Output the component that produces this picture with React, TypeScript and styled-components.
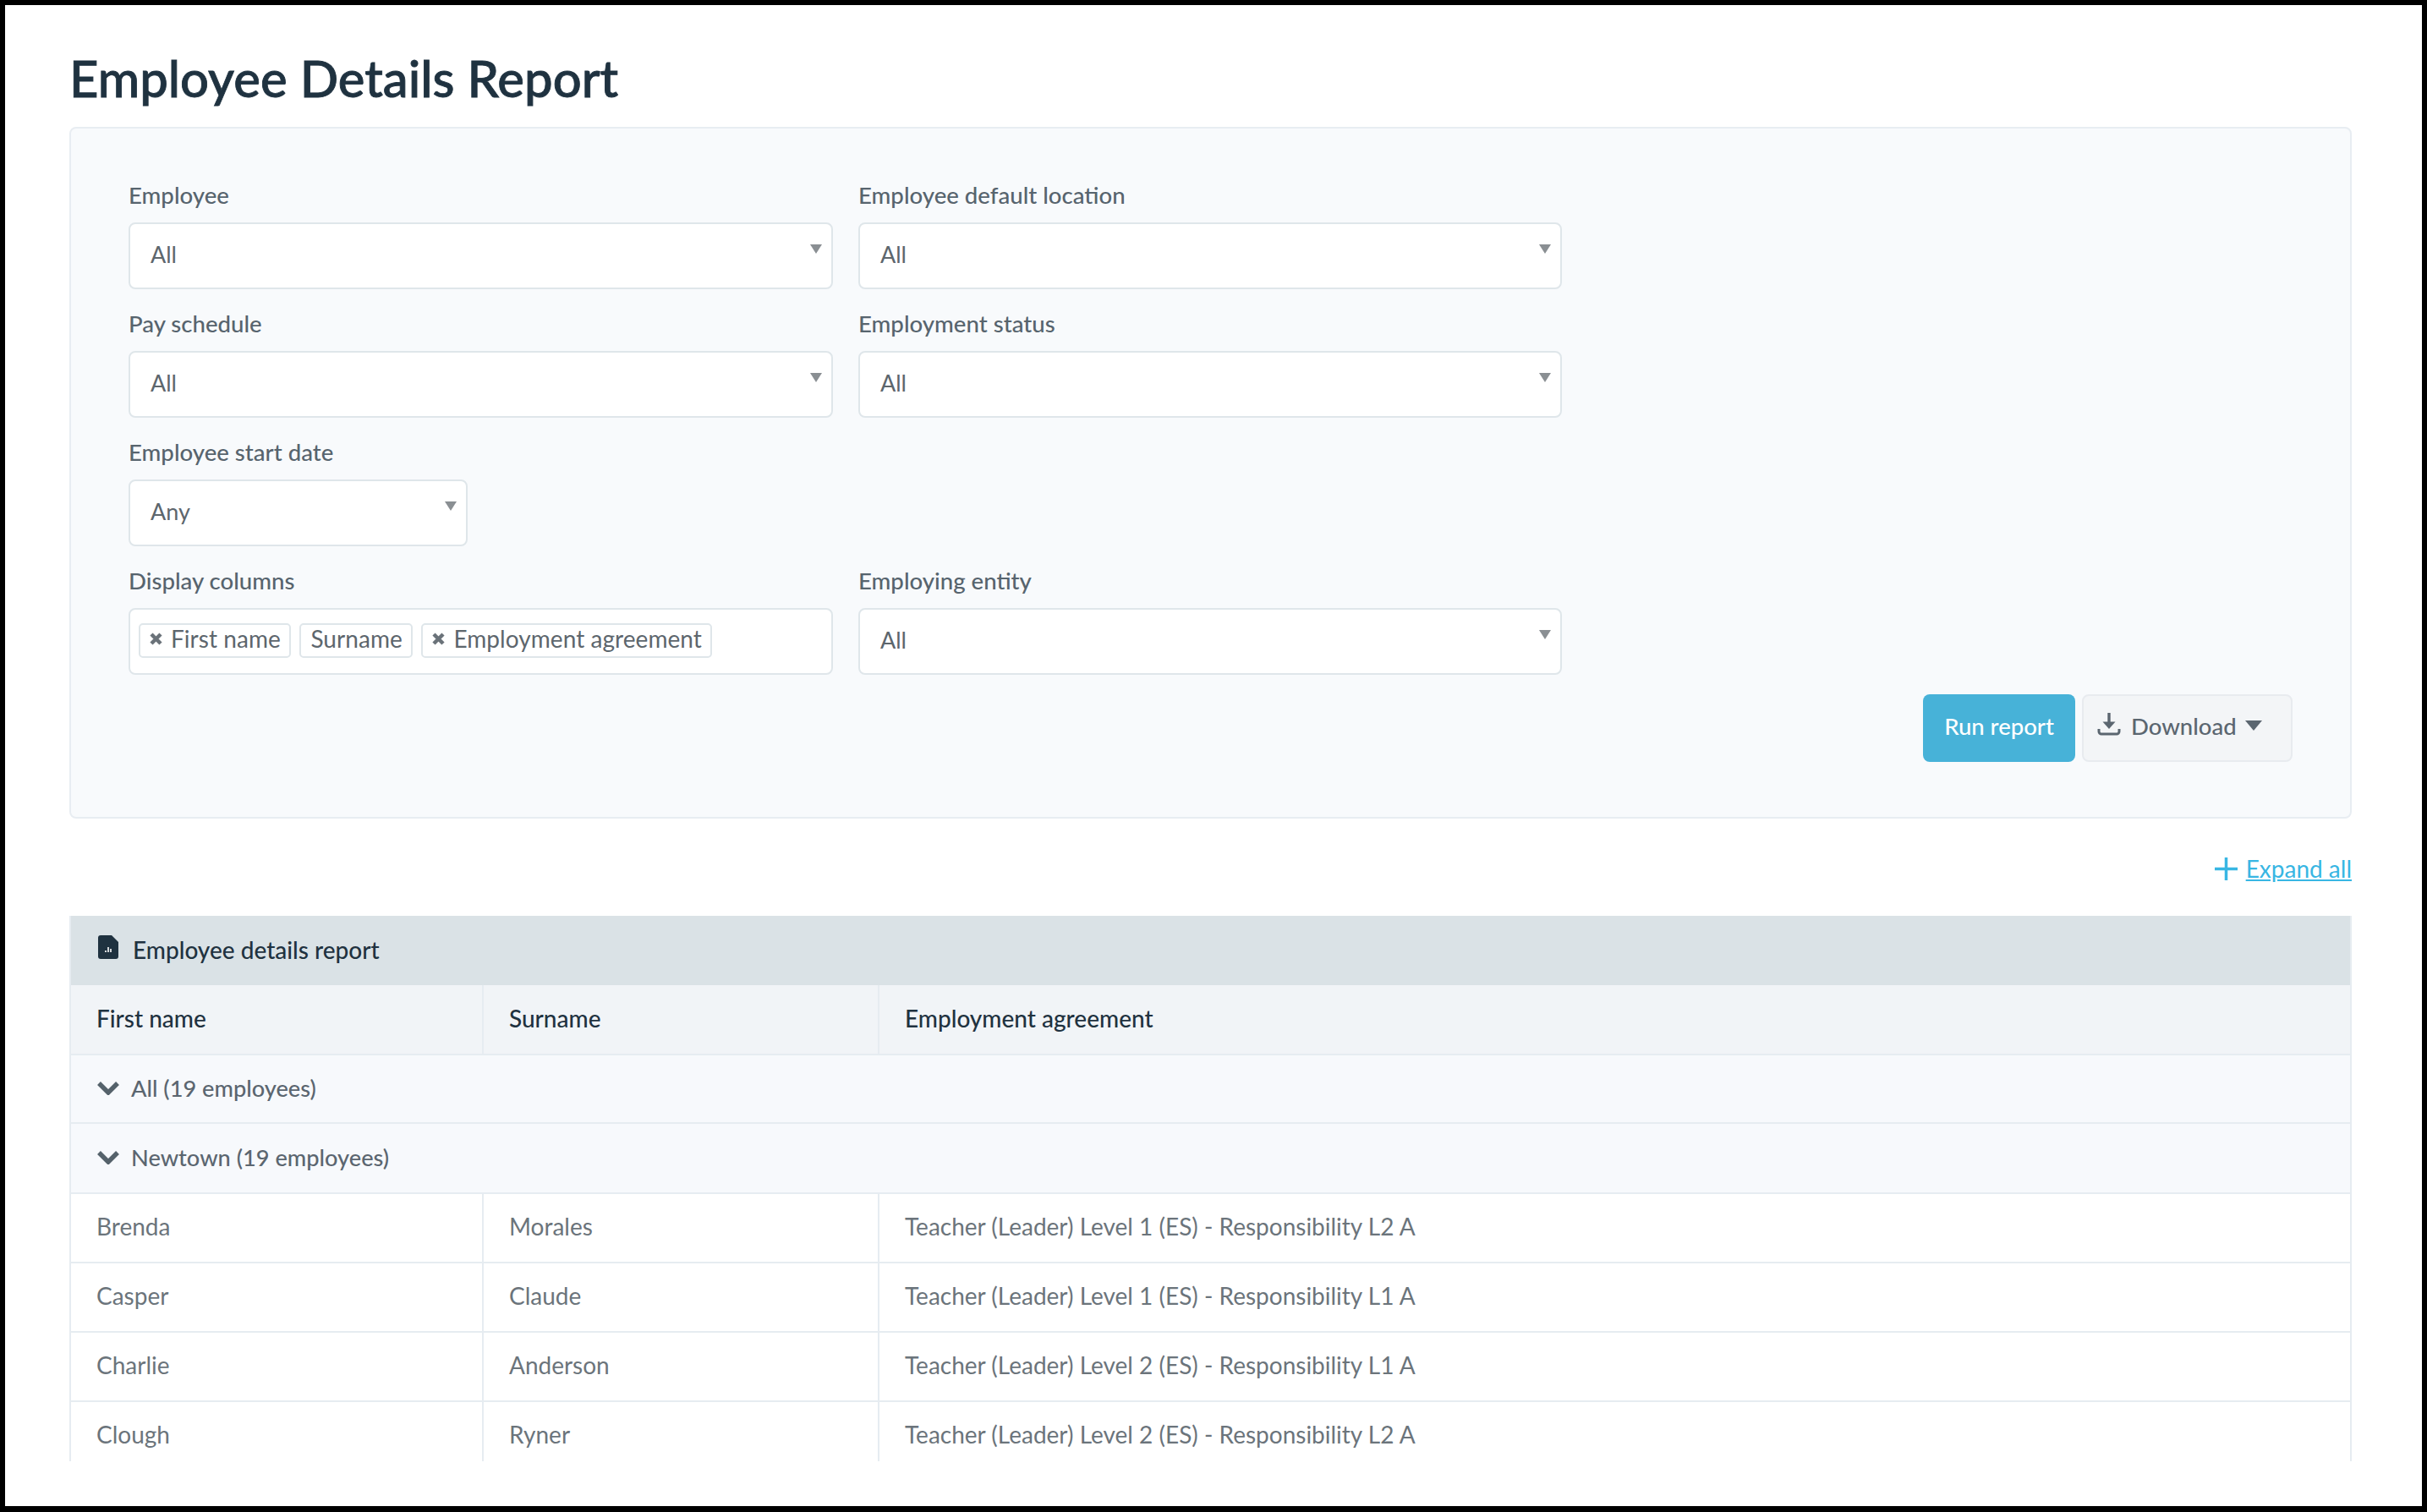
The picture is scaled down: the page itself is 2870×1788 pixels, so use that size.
import React from "react";
import styled, { createGlobalStyle } from "styled-components";

const GlobalStyle = createGlobalStyle`
  html, body {
    margin: 0;
    padding: 0;
    background: #000;
    font-family: "Lato", "Liberation Sans", sans-serif;
  }
  * { box-sizing: border-box; }
`;

const Frame = styled.div`
  width: 2870px;
  height: 1788px;
  padding: 6px 6px 7px 6px;
  background: #000;
  overflow: hidden;
`;

const Page = styled.div`
  height: 100%;
  background: #fff;
  padding: 46px 83px 0 76px;
  display: flex;
  flex-direction: column;
`;

const Title = styled.h1`
  margin: 0 0 18px;
  font-size: 59.8px;
  line-height: 80px;
  font-weight: 500;
  -webkit-text-stroke: 0.9px #1f3240;
  color: #1f3240;
`;

const FilterPanel = styled.section`
  height: 818px;
  flex: none;
  background: #f8fafc;
  border: 2px solid #e8edf2;
  border-radius: 8px;
  padding: 62px 68px 0 68px;
  display: flex;
  flex-direction: column;
`;

const FormGrid = styled.div`
  display: grid;
  grid-template-columns: 833px 832px;
  column-gap: 30px;
  row-gap: 24px;
`;

const Field = styled.div<{ $narrow?: boolean }>`
  display: flex;
  flex-direction: column;
  width: ${(p) => (p.$narrow ? "401px" : "auto")};
`;

const Label = styled.label`
  font-size: 27.6px;
  line-height: 36px;
  font-weight: 500;
  color: #57646e;
  margin: -1px 0 14px;
`;

const SelectBox = styled.div`
  height: 79px;
  background: #fff;
  border: 2px solid #dfe6ea;
  border-radius: 8px;
  padding: 0 11px 5px 24px;
  display: flex;
  align-items: center;
  justify-content: space-between;
  font-size: 27px;
  color: #5d666d;
`;

const Caret = styled.svg`
  width: 14px;
  height: 11px;
  margin-bottom: 11px;
  fill: #8a8f93;
`;

const TagBox = styled.div`
  height: 79px;
  background: #fff;
  border: 2px solid #dfe6ea;
  border-radius: 8px;
  padding: 16px 10px 0;
  display: flex;
  align-items: flex-start;
  gap: 10.5px;
`;

const Tag = styled.span`
  height: 41px;
  background: #fff;
  border: 2px solid #dfe6ea;
  border-radius: 5px;
  padding: 0 10px 5px 11px;
  display: inline-flex;
  align-items: center;
  gap: 10px;
  font-size: 28px;
  letter-spacing: 0.06px;
  color: #5d666d;
`;

const TagX = styled.svg`
  width: 15px;
  height: 15px;
  stroke: #6a7279;
  stroke-width: 4.5;
  fill: none;
`;

const Actions = styled.div`
  margin-top: 23px;
  display: flex;
  justify-content: flex-end;
  gap: 8px;
`;

const RunButton = styled.button`
  width: 180px;
  height: 80px;
  border: 0;
  border-radius: 8px;
  background: #47b2d8;
  color: #fff;
  font: 500 27.5px "Lato", sans-serif;
  padding: 0 0 5px;
`;

const DownloadButton = styled.button`
  width: 249px;
  height: 80px;
  border: 2px solid #e8ebef;
  border-radius: 8px;
  background: #f3f5f7;
  color: #5b6670;
  font: 500 27.5px "Lato", sans-serif;
  padding: 0 0 5px 16px;
  display: flex;
  align-items: center;
`;

const DownloadIcon = styled.svg`
  width: 28px;
  height: 28px;
  margin: -6px 12px 0 0;
  flex: none;
`;

const DownCaret = styled.svg`
  width: 20px;
  height: 12px;
  margin: -1px 0 0 10px;
  fill: #5b6670;
`;

const ExpandRow = styled.div`
  margin: 36px 0 33px;
  height: 46px;
  display: flex;
  align-items: center;
  justify-content: flex-end;
  gap: 10px;
`;

const PlusIcon = styled.svg`
  width: 27px;
  height: 27px;
  stroke: #38b6e3;
  stroke-width: 3.5;
`;

const ExpandLink = styled.a`
  font-size: 28px;
  color: #38b6e3;
  text-decoration: underline;
`;

const Table = styled.div`
  flex: none;
  height: 645px;
  overflow: hidden;
  border-left: 2px solid #e6ecf1;
  border-right: 2px solid #e6ecf1;
`;

const ReportHead = styled.div`
  height: 82px;
  background: #dae2e6;
  padding: 0 0 3px 32px;
  display: flex;
  align-items: center;
  gap: 17px;
  font-size: 28px;
  font-weight: 500;
  color: #1f3240;
`;

const DocIcon = styled.svg`
  width: 24px;
  height: 28px;
  margin-top: -6px;
`;

const Row = styled.div<{ $head?: boolean }>`
  height: ${(p) => (p.$head ? "83px" : "82px")};
  display: grid;
  grid-template-columns: 488px 468px 1fr;
  background: ${(p) => (p.$head ? "#f1f4f7" : "#fff")};
  border-bottom: 2px solid #e6ecf1;
`;

const Cell = styled.div<{ $head?: boolean }>`
  padding: 0 0 4px 30px;
  display: flex;
  align-items: center;
  font-size: 28px;
  font-weight: ${(p) => (p.$head ? 500 : 400)};
  color: ${(p) => (p.$head ? "#1f3240" : "#6b747b")};
  border-right: 2px solid #e6ecf1;
  &:last-child { border-right: 0; }
`;

const GroupRow = styled.div<{ $tall?: boolean }>`
  height: ${(p) => (p.$tall ? "83px" : "81px")};
  background: #f7f9fc;
  border-bottom: 2px solid #e6ecf1;
  padding: 0 0 2px 31px;
  display: flex;
  align-items: center;
  gap: 14px;
  font-size: 27.2px;
  font-weight: 500;
  color: #5b6670;
`;

const Chevron = styled.svg`
  width: 26px;
  height: 16px;
  fill: none;
  stroke: #55626b;
  stroke-width: 5.5;
`;

const people = [
  ["Brenda", "Morales", "Teacher (Leader) Level 1 (ES) - Responsibility L2 A"],
  ["Casper", "Claude", "Teacher (Leader) Level 1 (ES) - Responsibility L1 A"],
  ["Charlie", "Anderson", "Teacher (Leader) Level 2 (ES) - Responsibility L1 A"],
  ["Clough", "Ryner", "Teacher (Leader) Level 2 (ES) - Responsibility L2 A"],
];

const Select = ({ value }: { value: string }) => (
  <SelectBox>
    {value}
    <Caret viewBox="0 0 14 11">
      <path d="M0 0h14L7 11z" />
    </Caret>
  </SelectBox>
);

const Remove = () => (
  <TagX viewBox="0 0 15 15">
    <path d="M2 2l11 11M13 2L2 13" />
  </TagX>
);

const Group = ({ label, tall }: { label: string; tall?: boolean }) => (
  <GroupRow $tall={tall}>
    <Chevron viewBox="0 0 26 16">
      <path d="M2 2l11 11L24 2" />
    </Chevron>
    {label}
  </GroupRow>
);

export default function App() {
  return (
    <Frame>
      <GlobalStyle />
      <Page>
        <Title>Employee Details Report</Title>
        <FilterPanel>
          <FormGrid>
            <Field>
              <Label>Employee</Label>
              <Select value="All" />
            </Field>
            <Field>
              <Label>Employee default location</Label>
              <Select value="All" />
            </Field>
            <Field>
              <Label>Pay schedule</Label>
              <Select value="All" />
            </Field>
            <Field>
              <Label>Employment status</Label>
              <Select value="All" />
            </Field>
            <Field $narrow>
              <Label>Employee start date</Label>
              <Select value="Any" />
            </Field>
            <div />
            <Field>
              <Label>Display columns</Label>
              <TagBox>
                <Tag>
                  <Remove />
                  First name
                </Tag>
                <Tag>Surname</Tag>
                <Tag>
                  <Remove />
                  Employment agreement
                </Tag>
              </TagBox>
            </Field>
            <Field>
              <Label>Employing entity</Label>
              <Select value="All" />
            </Field>
          </FormGrid>
          <Actions>
            <RunButton>Run report</RunButton>
            <DownloadButton>
              <DownloadIcon viewBox="0 0 28 28">
                <path d="M14 1v14" stroke="#5b6670" strokeWidth="3.4" fill="none" />
                <path d="M6.5 11.5h15L14 20z" fill="#5b6670" />
                <path d="M2 20v3a3 3 0 0 0 3 3h18a3 3 0 0 0 3-3v-3" stroke="#5b6670" strokeWidth="3" fill="none" />
              </DownloadIcon>
              Download
              <DownCaret viewBox="0 0 20 12">
                <path d="M0 0h20L10 12z" />
              </DownCaret>
            </DownloadButton>
          </Actions>
        </FilterPanel>
        <ExpandRow>
          <PlusIcon viewBox="0 0 27 27">
            <path d="M13.5 0v27M0 13.5h27" />
          </PlusIcon>
          <ExpandLink>Expand all</ExpandLink>
        </ExpandRow>
        <Table>
          <ReportHead>
            <DocIcon viewBox="0 0 24 28">
              <path d="M3 0h13l8 8v17a3 3 0 0 1-3 3H3a3 3 0 0 1-3-3V3a3 3 0 0 1 3-3z" fill="#1f3240" />
              <path d="M9 20v-2M12 20v-6M15 20v-4" stroke="#fff" strokeWidth="1.6" />
            </DocIcon>
            Employee details report
          </ReportHead>
          <Row $head>
            <Cell $head>First name</Cell>
            <Cell $head>Surname</Cell>
            <Cell $head>Employment agreement</Cell>
          </Row>
          <Group label="All (19 employees)" />
          <Group label="Newtown (19 employees)" tall />
          {people.map((p) => (
            <Row key={p[0]}>
              <Cell>{p[0]}</Cell>
              <Cell>{p[1]}</Cell>
              <Cell>{p[2]}</Cell>
            </Row>
          ))}
        </Table>
      </Page>
    </Frame>
  );
}
